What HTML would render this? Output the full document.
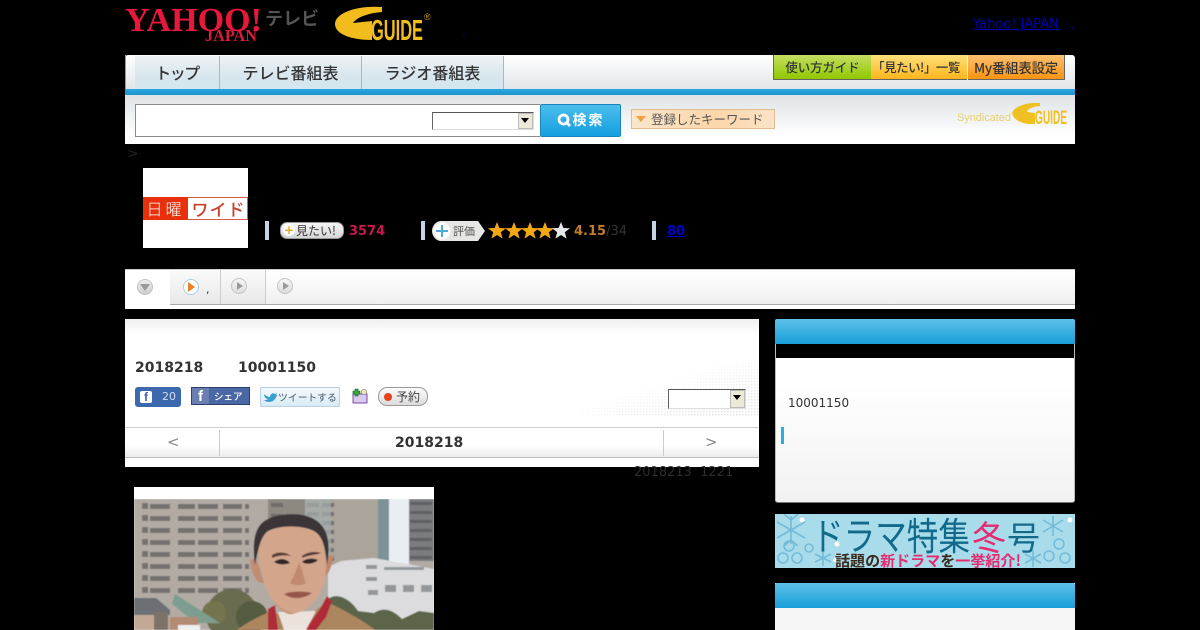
<!DOCTYPE html>
<html lang="ja"><head><meta charset="utf-8"><title>日曜ワイド</title>
<style>
html,body{margin:0;padding:0;background:#000;}
body{width:1200px;height:630px;overflow:hidden;position:relative;font-family:"DejaVu Sans","Noto Sans CJK JP",sans-serif;}
.a{position:absolute;white-space:nowrap;}
.j{font-family:"Noto Sans CJK JP","Liberation Sans",sans-serif;}
.tab{position:absolute;top:56px;height:33px;background:linear-gradient(#eef3f5,#d8e6ee 60%,#d4e6ef);border-right:1px solid #a9b8c0;text-align:center;font:500 16px/33px "Noto Sans CJK JP",sans-serif;color:#333;}
.btn{position:absolute;top:55px;height:24px;border:0 solid #666;border-bottom:1px solid #666;font:500 12.4px/24px "Noto Sans CJK JP","Liberation Sans",sans-serif;color:#333;text-align:center;white-space:nowrap;}
.sel{position:absolute;background:#fff;border-top:1px solid #555;border-left:1px solid #666;border-right:1px solid #ddd;border-bottom:1px solid #ddd;box-sizing:border-box;}
.sel i{position:absolute;right:0;top:0;bottom:0;width:15px;background:#ece9d8;border:1px solid #bbb;box-sizing:border-box;}
.sel i:after{content:"";position:absolute;left:2px;top:4px;border:4px solid transparent;border-top:5px solid #000;}
.sep{position:absolute;top:221px;width:4px;height:19px;background:#c6d4e6;}
.ico{position:absolute;width:14px;height:14px;border-radius:50%;background:linear-gradient(#f6f6f6,#ddd);border:1px solid #c4c4c4;}
.ico:after{content:"";position:absolute;left:5px;top:3px;border:4px solid transparent;border-left:6px solid #999;}
</style></head><body>

<!-- header logos -->
<svg class="a" style="left:125px;top:0" width="320" height="50">
<text x="0" y="31" font-family="Liberation Serif" font-weight="700" font-size="34" fill="#e8173c" textLength="137" lengthAdjust="spacingAndGlyphs">YAHOO!</text>
<text x="80" y="41" font-family="Liberation Serif" font-weight="700" font-size="17" fill="#d81e3c" textLength="52" lengthAdjust="spacingAndGlyphs">JAPAN</text>
<text x="140" y="25" font-family="Noto Sans CJK JP" font-weight="700" font-size="18" fill="#555" textLength="54">テレビ</text>
<path d="M257 7C232 5 210 13 210 24C210 34 226 40 247 40L247 21L228 23C232 17 244 13 257 12Z" fill="#f2bd1c"/>
<text x="246" y="40" font-family="Liberation Sans" font-weight="700" font-size="29" fill="#f2bd1c" textLength="52" lengthAdjust="spacingAndGlyphs">GUIDE</text>
<text x="299" y="20" font-family="Liberation Sans" font-size="9" fill="#c9a030">®</text>
</svg>
<div class="a" style="left:462px;top:24px;font-size:12px;line-height:14px;color:#00008a;">,</div>
<div class="a" style="left:973px;top:17px;font-size:13px;line-height:15px;color:#0000b8;text-decoration:underline;">Yahoo! JAPAN</div>
<div class="a" style="left:1071px;top:17px;font-size:12px;line-height:14px;color:#00008a;">,</div>

<!-- nav -->
<div class="a" style="left:125px;top:55px;width:950px;height:34px;background:linear-gradient(#fff,#e3e6e8);border-radius:3px 3px 0 0;"></div>
<div class="a" style="left:125px;top:89px;width:950px;height:6px;background:linear-gradient(#2aa6e0,#1c93cc);"></div>
<div class="a" style="left:125px;top:55px;width:1px;height:34px;background:#999"></div>
<div class="tab" style="left:135px;width:84px;letter-spacing:-1.5px;">トップ</div>
<div class="tab" style="left:220px;width:141px;">テレビ番組表</div>
<div class="tab" style="left:362px;width:141px;">ラジオ番組表</div>
<div class="btn" style="left:773px;width:97px;border-left:1px solid #666;background:linear-gradient(#c4de62,#90c800);">使い方ガイド</div>
<div class="btn" style="left:871px;width:90px;padding-right:6px;background:linear-gradient(#ffe07a,#fdb51c);letter-spacing:-.4px;">「見たい!」一覧</div>
<div class="btn" style="left:968px;width:96px;border-right:1px solid #666;background:linear-gradient(#ffc070,#fb9410);font-size:13.4px;letter-spacing:-.2px;">My番組表設定</div>

<!-- search band -->
<div class="a" style="left:125px;top:95px;width:950px;height:49px;background:linear-gradient(#dfe3e6,#fff 85%);"></div>
<div class="a" style="left:135px;top:104px;width:405px;height:33px;box-sizing:border-box;background:#fff;border:1px solid #8a8a8a;border-right:0;"></div>
<div class="sel" style="left:432px;top:112px;width:102px;height:18px;"><i></i></div>
<div class="a j" style="left:540px;top:104px;width:81px;height:33px;box-sizing:border-box;border:1px solid #1a86bd;background:linear-gradient(#4dbdec,#14a0e0);border-radius:2px;color:#fff;font-weight:700;font-size:14px;line-height:31px;text-align:center;letter-spacing:2px;">
<svg width="14" height="14" style="vertical-align:-2px;margin-right:2px"><circle cx="6.5" cy="6.5" r="4.5" fill="none" stroke="#fff" stroke-width="2.8"/><path d="M9 9l4 4" stroke="#fff" stroke-width="2.8"/></svg>検索</div>
<div class="a j" style="left:631px;top:109px;width:144px;height:20px;box-sizing:border-box;border:1px solid #e0bc90;background:linear-gradient(90deg,#fbe6cc,#fcd6a8 60%,#fbe3c8);font-size:12.5px;line-height:18px;color:#555;padding-left:19px;">登録したキーワード</div>
<div class="a" style="left:636px;top:116px;border:5px solid transparent;border-top:6px solid #f0a040;"></div>
<svg class="a" style="left:957px;top:100px" width="112" height="28">
<text x="0" y="21" font-family="Liberation Sans" font-size="11" fill="#e8cf70" textLength="54">Syndicated</text>
<path d="M55 13C57 7 68 2 83 3L83 6C74 7 71 9 70 12L78 13L78 24L72 24C63 23 56 19 55 13Z" fill="#f0bf20"/>
<text x="78" y="24" font-family="Liberation Sans" font-weight="700" font-size="19" fill="#f0bf20" textLength="32" lengthAdjust="spacingAndGlyphs">GUIDE</text>
</svg>

<div class="a" style="left:127px;top:146px;font-size:14px;line-height:16px;color:#222;">&gt;</div>

<!-- programme thumb -->
<div class="a" style="left:143px;top:168px;width:105px;height:80px;background:#fff;"></div>
<div class="a" style="left:143px;top:197px;width:105px;height:23px;background:#fff;border:1px solid #d65b48;box-sizing:border-box;"></div>
<div class="a j" style="left:143px;top:197px;width:45px;height:23px;background:#e8300c;color:#fff;font-size:16px;line-height:23px;text-align:center;font-weight:300;letter-spacing:3px;">日曜</div>
<div class="a j" style="left:189px;top:197px;width:59px;height:23px;color:#c8402c;font-size:17px;line-height:23px;text-align:center;letter-spacing:1px;font-weight:500;">ワイド</div>

<!-- stats -->
<div class="sep" style="left:265px"></div>
<div class="a j" style="left:280px;top:222px;width:64px;height:17px;box-sizing:border-box;border:1px solid #999;border-radius:7px;background:linear-gradient(#f6f6f6,#d5d5d5);font-size:12px;line-height:15px;color:#333;padding-left:15px;">見たい!</div>
<div class="a" style="left:283px;top:224px;width:12px;height:12px;border-radius:50%;background:#fff;color:#e8a820;font:700 12px/12px 'DejaVu Sans';text-align:center;">+</div>
<div class="a" style="left:349px;top:224px;font-size:13px;line-height:16px;font-weight:700;color:#c8174e;">3574</div>
<div class="sep" style="left:421px"></div>
<svg class="a" style="left:432px;top:220px" width="54" height="22"><path d="M9 1H46L53 11L46 21H9C4 21 0 16 0 11S4 1 9 1Z" fill="#e6e6e4"/><circle cx="10" cy="11" r="8.5" fill="#fff"/><path d="M10 5v12M4 11h12" stroke="#4fa8dc" stroke-width="2"/></svg>
<div class="a j" style="left:453px;top:221px;font-size:11px;line-height:20px;color:#555;">評価</div>
<svg class="a" style="left:488px;top:221px" width="84" height="20">
<defs><path id="s" d="M0-9L2.4-3 9-2.8 3.8 1.2 5.6 7.6 0 4 -5.6 7.6 -3.8 1.2 -9-2.8 -2.4-3Z"/></defs>
<use href="#s" x="9" y="10" fill="#f3a712"/><use href="#s" x="26" y="10" fill="#f3a712"/><use href="#s" x="42" y="10" fill="#f3a712"/><use href="#s" x="57" y="10" fill="#f3a712"/><use href="#s" x="73" y="10" fill="#e8e8e8"/>
</svg>
<div class="a" style="left:574px;top:224px;font-size:13px;line-height:16px;font-weight:700;color:#c27c2c;">4.15<span style="font-weight:400;color:#333">/34</span></div>
<div class="sep" style="left:652px"></div>
<div class="a" style="left:667px;top:224px;font-size:13px;line-height:16px;font-weight:700;color:#0000cc;text-decoration:underline;">80</div>

<!-- tab bar -->
<div class="a" style="left:125px;top:269px;width:950px;height:40px;background:linear-gradient(#fff,#f0f0f0 85%);border-top:1px solid #ccc;box-sizing:border-box;"></div>
<div class="a" style="left:125px;top:304px;width:950px;height:1px;background:#aaa;"></div>
<div class="a" style="left:125px;top:305px;width:950px;height:4px;background:#fff;"></div>
<div class="a" style="left:170px;top:270px;width:50px;height:34px;background:linear-gradient(#fafafa,#e8e8e8);border-right:1px solid #ccc;"></div>
<div class="a" style="left:221px;top:270px;width:44px;height:34px;background:linear-gradient(#fafafa,#e8e8e8);border-right:1px solid #ccc;"></div>
<div class="a" style="left:125px;top:270px;width:45px;height:39px;background:#fff;"></div>
<div class="a" style="left:137px;top:279px;width:14px;height:14px;border-radius:50%;background:linear-gradient(#eee,#ccc);border:1px solid #c4c4c4;"></div>
<div class="a" style="left:140px;top:284px;border:5px solid transparent;border-top:7px solid #999;"></div>
<div class="ico" style="left:183px;top:279px;background:#fff;border-color:#a8cfe4;"></div>
<div class="a" style="left:188px;top:282px;border:5px solid transparent;border-left:7px solid #e8832a;"></div>
<div class="a" style="left:206px;top:283px;font-size:11px;line-height:14px;color:#333;">,</div>
<div class="ico" style="left:231px;top:278px;"></div>
<div class="ico" style="left:277px;top:278px;"></div>

<!-- main panel -->
<div class="a" style="left:125px;top:319px;width:634px;height:148px;background:linear-gradient(#f0f0f0,#fff 16px);"></div>
<svg class="a" style="left:580px;top:360px" width="179" height="56"><defs><pattern id="d" width="3" height="3" patternUnits="userSpaceOnUse"><rect width="1.5" height="1.5" fill="#e4e4e4"/></pattern><linearGradient id="g" x1="0" y1="0" x2="1" y2="1"><stop offset=".4" stop-color="#000"/><stop offset=".85" stop-color="#fff"/></linearGradient><mask id="m"><rect width="179" height="56" fill="url(#g)"/></mask></defs><rect width="179" height="56" fill="url(#d)" mask="url(#m)"/></svg>
<div class="a" style="left:135px;top:359px;font-size:14px;line-height:18px;font-weight:700;color:#333;">2018218</div>
<div class="a" style="left:238px;top:359px;font-size:14px;line-height:18px;font-weight:700;color:#333;">10001150</div>

<div class="a" style="left:135px;top:387px;width:46px;height:20px;border-radius:3px;background:#3c68ae;"></div>
<div class="a" style="left:140px;top:391px;width:12px;height:12px;border-radius:2px;background:#fff;color:#3c68ae;font:700 12px/13px 'Liberation Sans';text-align:center;">f</div>
<div class="a" style="left:162px;top:390px;font-size:11px;line-height:14px;color:#d4ddee;">20</div>
<div class="a" style="left:191px;top:387px;width:59px;height:18px;box-sizing:border-box;background:#4a66a4;border:1px solid #2c4170;"></div>
<div class="a" style="left:192px;top:388px;width:17px;height:16px;background:#6a7fb0;color:#fff;font:700 15px/17px 'Liberation Sans';text-align:center;">f</div>
<div class="a j" style="left:214px;top:388px;font-size:9.5px;line-height:16px;font-weight:500;color:#fff;">シェア</div>
<div class="a j" style="left:260px;top:387px;width:80px;height:20px;box-sizing:border-box;border:1px solid #b8d0e0;border-radius:2px;background:linear-gradient(#f4f9fc,#d8ebf6);font-size:9.8px;line-height:18px;color:#456;padding-left:17px;">ツイートする</div>
<svg class="a" style="left:263px;top:391px" width="14" height="12"><path d="M1 3c2 2 4 3 6 3 0-3 3-5 5-3l2-1-1 2 1 0c-1 4-4 7-8 7-2 0-4-1-5-2 2 0 3 0 4-1C3 8 1 6 1 3Z" fill="#3a9fd0"/></svg>
<svg class="a" style="left:351px;top:388px" width="17" height="16"><rect x="2" y="6" width="14" height="9" fill="#d8c8ee" stroke="#7a4aa8"/><path d="M4 1h3v2h2v3H7v2H4V6H2V3h2Z" fill="#2fa83c" stroke="#155a20" stroke-width=".6"/><circle cx="13" cy="4" r="2.6" fill="#f4e8b0" stroke="#888" stroke-width=".7"/></svg>
<div class="a j" style="left:378px;top:387px;width:50px;height:19px;box-sizing:border-box;border:1px solid #999;border-radius:9px;background:linear-gradient(#fbfbfb,#dcdcdc);font-size:12px;line-height:17px;color:#444;padding-left:17px;">予約</div>
<div class="a" style="left:384px;top:393px;width:8px;height:8px;border-radius:50%;background:#e4411c;"></div>
<div class="sel" style="left:668px;top:389px;width:78px;height:20px;background:#fff;"><i></i></div>

<div class="a" style="left:125px;top:427px;width:634px;height:1px;background:#ccc;"></div>
<div class="a" style="left:125px;top:428px;width:634px;height:30px;background:linear-gradient(#fff 60%,#ececec);border-bottom:1px solid #bbb;box-sizing:border-box;"></div>
<div class="a" style="left:219px;top:430px;width:1px;height:26px;background:#ccc;"></div>
<div class="a" style="left:663px;top:430px;width:1px;height:26px;background:#ccc;"></div>
<div class="a" style="left:167px;top:433px;font-size:15px;line-height:18px;color:#888;">&lt;</div>
<div class="a" style="left:395px;top:434px;font-size:14px;line-height:18px;font-weight:700;color:#333;">2018218</div>
<div class="a" style="left:705px;top:433px;font-size:15px;line-height:18px;color:#888;">&gt;</div>
<div class="a" style="left:634px;top:465px;font-size:13px;line-height:16px;color:#2c2c2c;">2018213&nbsp;&nbsp;1221</div>

<!-- photo -->
<div class="a" style="left:134px;top:487px;width:300px;height:143px;background:#fff;"></div>
<svg class="a" style="left:134px;top:499px" width="300" height="131">
<defs>
<pattern id="w" x="0" y="4" width="134" height="12" patternUnits="userSpaceOnUse"><rect width="134" height="12" fill="#b2aba4"/><g fill="#75716f"><rect x="8" y="0" width="6" height="6"/><rect x="16" y="1" width="20" height="5"/><rect x="44" y="1" width="17" height="5"/><rect x="64" y="1" width="20" height="5"/><rect x="89" y="1" width="19" height="5"/><rect x="111" y="1" width="4" height="5"/></g></pattern>
<pattern id="w2" x="0" y="3" width="130" height="9" patternUnits="userSpaceOnUse"><rect width="130" height="9" fill="#aaa49b"/><g fill="#6f6e72"><rect x="27" y="1" width="13" height="4"/><rect x="43" y="1" width="12" height="4"/><rect x="58" y="1" width="12" height="4"/></g></pattern>
<pattern id="w3" x="0" y="2" width="25" height="9" patternUnits="userSpaceOnUse"><rect width="25" height="9" fill="#7a7c80"/><rect x="1" y="1" width="22" height="3" fill="#5e6064"/></pattern>
<filter id="b"><feGaussianBlur stdDeviation=".6"/></filter>
</defs>
<g filter="url(#b)">
<rect width="300" height="131" fill="#b2aba4"/>
<rect width="134" height="100" fill="url(#w)"/>
<rect x="134" width="37" height="90" fill="#8d8880"/>
<g fill="#6f6c68"><rect x="137" y="4" width="12" height="4"/><rect x="137" y="15" width="12" height="4"/><rect x="137" y="27" width="8" height="4"/></g>
<rect x="171" width="84" height="70" fill="url(#w2)"/>
<rect x="171" width="26" height="70" fill="#a4adab" opacity=".75"/>
<rect x="244" width="11" height="70" fill="#7c9296"/>
<rect x="255" width="20" height="70" fill="#e9eef2"/>
<rect x="275" width="25" height="62" fill="url(#w3)"/>
<path d="M194 131V68L207 62L240 59L300 70V131Z" fill="#dcdcde"/>
<g fill="#93979c"><rect x="232" y="66" width="11" height="4"/><rect x="232" y="78" width="11" height="4"/><rect x="234" y="91" width="10" height="5"/><rect x="251" y="86" width="11" height="7"/><rect x="269" y="86" width="11" height="7"/><rect x="287" y="86" width="11" height="7"/><rect x="250" y="68" width="40" height="3"/></g>
<path d="M194 131V100C204 92 218 102 224 112L240 114C252 106 262 114 268 120L285 112L300 114V131Z" fill="#5b6548"/>
<circle cx="98" cy="116" r="26" fill="#6a6c50"/><circle cx="80" cy="114" r="12" fill="#74744e"/><circle cx="118" cy="118" r="16" fill="#565c40"/>
<path d="M0 99H22L36 111V116H0Z" fill="#6c6f74"/>
<rect y="116" width="34" height="15" fill="#c4a896"/>
<rect x="20" y="113" width="14" height="18" fill="#7c7268"/>
<path d="M41 95L86 124H62L38 105Z" fill="#7b9d90"/>
<rect x="36" y="118" width="28" height="13" fill="#b38a72"/>
<rect x="44" y="126" width="22" height="5" fill="#eee"/>
<path d="M103 131C112 124 124 118 137 112L155 120L172 118L193 103C212 112 230 122 241 131Z" fill="#ab865f"/>
<path d="M134 131V110L141 106L144 131Z" fill="#b02a38"/>
<path d="M171 131L186 110L193 97L198 102L192 118L182 131Z" fill="#b02a38"/>
<path d="M144 113L150 131H172L182 112Z" fill="#ece2dc"/>
<path d="M132 84L138 100C146 112 154 118 162 114C176 110 186 96 190 82L174 70L145 70Z" fill="#c49072"/>
<path d="M116 62C118 58 122 60 124 64L130 84C124 86 118 78 116 62Z" fill="#c18d72"/>
<path d="M199 58C198 55 194 56 192 60L188 78C194 78 198 68 199 58Z" fill="#bd886c"/>
<path d="M123 45C120 28 136 22 156 22C176 22 195 30 193 58C192 72 191 86 187 92C180 105 170 114 160 114C150 114 140 104 134 94C129 82 125 62 123 45Z" fill="#d3a68c"/>
<path d="M121 66C118 44 120 26 134 20C146 14 168 13 180 20C194 28 197 44 193 66C191 50 190 38 180 32C168 26 146 26 134 32C126 38 124 52 121 66Z" fill="#3a3638"/>
<path d="M138 56C144 52 152 53 157 57C151 56 145 56 138 59ZM168 57C173 53 181 52 187 54C182 56 174 56 168 59Z" fill="#5a3e34"/>
<path d="M140 63C145 59 152 59 156 64C151 66 145 66 140 63ZM168 63C172 59 180 59 184 61C180 65 172 66 168 63Z" fill="#33282a"/>
<path d="M156 84C160 87 168 87 172 84C170 80 168 68 165 64C162 70 160 78 156 84Z" fill="#c08a70"/>
<path d="M150 95C157 92 170 92 178 94C170 100 158 101 150 95Z" fill="#95544c"/>
</g>
</svg>

<!-- sidebar -->
<div class="a" style="left:775px;top:319px;width:300px;height:184px;box-sizing:border-box;background:linear-gradient(#fff 35%,#f2f2f2);border:1px solid #bbb;border-top:0;border-bottom:1px solid #777;border-radius:3px;"></div>
<div class="a" style="left:775px;top:319px;width:300px;height:25px;background:linear-gradient(#5cc0ea,#189fd8);border-radius:2px 2px 0 0;"></div>
<div class="a" style="left:776px;top:344px;width:298px;height:14px;background:#000;"></div>
<div class="a" style="left:788px;top:395px;font-size:12px;line-height:16px;color:#333;">10001150</div>
<div class="a" style="left:781px;top:427px;width:3px;height:17px;background:#25b0e0;"></div>

<svg class="a" style="left:775px;top:514px" width="300" height="54">
<rect width="300" height="54" fill="#a9dcea"/>
<g stroke="#6fb8d8" stroke-width="1.6" fill="none" opacity=".9">
<path d="M16 2v28M2 8l28 16M30 8L2 24M9 0l7 6 7-6M9 32l7-6 7 6"/>
<circle cx="14" cy="32" r="5"/><circle cx="8" cy="44" r="5"/><circle cx="22" cy="44" r="5"/><circle cx="34" cy="34" r="4"/>
<path d="M48 36v16M40 40l16 8M56 40l-16 8"/>
<path d="M278 2v20M268 6l20 12M288 6l-20 12"/>
<circle cx="284" cy="30" r="5"/><circle cx="274" cy="42" r="5"/><circle cx="290" cy="44" r="5"/>
<path d="M258 36v17M250 40l16 9M266 40l-16 9"/>
</g>
<circle cx="27" cy="6" r="2.5" fill="#fff"/><circle cx="62" cy="30" r="2.5" fill="#fff"/><circle cx="295" cy="6" r="2.5" fill="#fff"/><circle cx="60" cy="46" r="2" fill="#fff"/>
<text x="37" y="36" font-family="Noto Sans CJK JP" font-size="38" font-weight="400" fill="#116a8c" textLength="158" lengthAdjust="spacingAndGlyphs">ドラマ特集</text>
<text x="197" y="36" font-family="Noto Sans CJK JP" font-size="34" fill="#e42c70">冬</text>
<text x="232" y="36" font-family="Noto Sans CJK JP" font-size="33" fill="#116a8c">号</text>
<text x="60" y="52" font-family="Noto Sans CJK JP" font-size="15" font-weight="700" textLength="186"><tspan fill="#3a2a1e">話題の</tspan><tspan fill="#e42c70">新ドラマ</tspan><tspan fill="#3a2a1e">を</tspan><tspan fill="#e42c70">一挙紹介!</tspan></text>
</svg>

<div class="a" style="left:775px;top:583px;width:300px;height:47px;background:#f5f5f5;"></div>
<div class="a" style="left:775px;top:583px;width:300px;height:25px;background:linear-gradient(#5cc0ea,#189fd8);border-radius:2px 2px 0 0;"></div>
</body></html>
